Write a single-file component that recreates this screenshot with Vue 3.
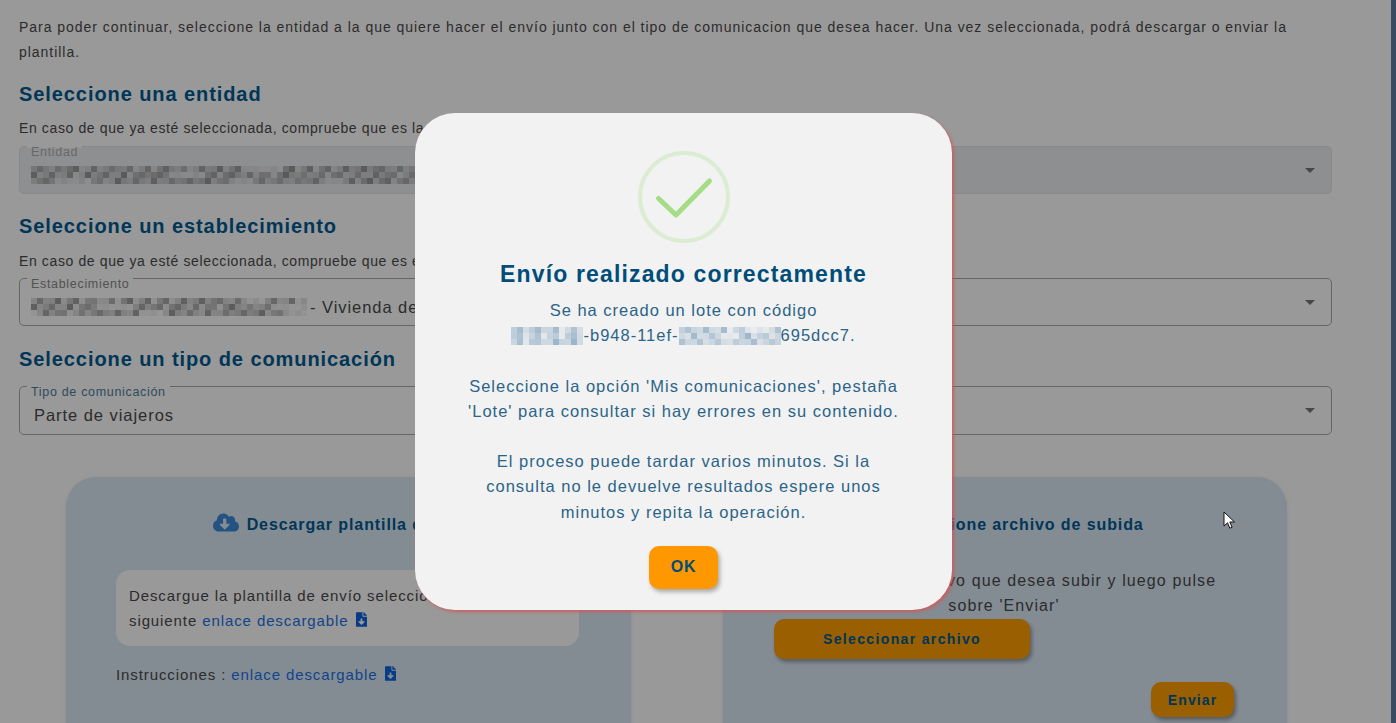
<script setup>
// shades for the censored parts of the text, same result on every render
function mosaic(cols, seed, gaps = []) {
  const cells = []
  let v = seed
  for (let c = 0; c < cols; c++) {
    for (let row = 0; row < 3; row++) {
      v = (v * 73 + 41) % 101
      const base = row === 1 ? 0.45 : row === 0 ? 0.2 : 0.08
      const o = base + (v / 101) * 0.3
      cells.push(+(gaps.includes(c) ? o * 0.25 : o).toFixed(2))
    }
  }
  return cells
}

const entidadCells = mosaic(64, 7, [12, 13, 29, 30, 44, 45, 54, 59])
const estabCells = mosaic(46, 19, [12, 19, 20, 29, 30, 37, 45])
const codeA = mosaic(12, 31)
const codeB = mosaic(17, 53, [4, 8])
</script>

<template>
  <div class="page">
    <div class="main">
      <p class="intro">
        Para poder continuar, seleccione la entidad a la que quiere hacer el envío junto con el tipo de comunicacion que desea hacer. Una vez seleccionada, podrá descargar o enviar la plantilla.
      </p>

      <h2 class="section-title first">Seleccione una entidad</h2>
      <p class="hint">En caso de que ya esté seleccionada, compruebe que es la correcta</p>
      <div class="field disabled">
        <span class="field-label">Entidad</span>
        <div class="field-value">
          <span class="mosaic" :style="{ width: 64 * 6 + 'px' }">
            <i v-for="(o, i) in entidadCells" :key="i" :style="{ opacity: o }"></i>
          </span>
        </div>
        <svg class="arrow" viewBox="0 0 10 5"><path d="M0 0l5 5 5-5z" /></svg>
      </div>

      <h2 class="section-title">Seleccione un establecimiento</h2>
      <p class="hint second">En caso de que ya esté seleccionada, compruebe que es el correcto</p>
      <div class="field">
        <span class="field-label">Establecimiento</span>
        <div class="field-value">
          <span class="mosaic" :style="{ width: 46 * 6 + 'px' }">
            <i v-for="(o, i) in estabCells" :key="i" :style="{ opacity: o }"></i>
          </span>
          <span class="after-mosaic">- Vivienda de uso turístico</span>
        </div>
        <svg class="arrow" viewBox="0 0 10 5"><path d="M0 0l5 5 5-5z" /></svg>
      </div>

      <h2 class="section-title tipo">Seleccione un tipo de comunicación</h2>
      <div class="field tall">
        <span class="field-label blue">Tipo de comunicación</span>
        <div class="field-value plain">Parte de viajeros</div>
        <svg class="arrow" viewBox="0 0 10 5"><path d="M0 0l5 5 5-5z" /></svg>
      </div>

      <div class="panels">
        <section class="panel">
          <h3 class="panel-title">
            <svg class="cloud" viewBox="0 0 640 512"><path d="M537.6 226.6c4.1-10.7 6.4-22.4 6.4-34.6 0-53-43-96-96-96-19.7 0-38.1 6-53.3 16.2C367 64.2 315.3 32 256 32c-88.4 0-160 71.6-160 160 0 2.7.1 5.4.2 8.1C40.2 219.8 0 273.2 0 336c0 79.5 64.5 144 144 144h368c70.7 0 128-57.3 128-128 0-61.9-44-113.6-102.4-125.4zm-132.9 88.7L299.3 420.7c-6.2 6.2-16.4 6.2-22.6 0L171.3 315.3c-10.1-10.1-2.9-27.3 11.3-27.3H248V176c0-8.8 7.2-16 16-16h48c8.8 0 16 7.2 16 16v112h65.4c14.2 0 21.4 17.2 11.3 27.3z" /></svg>
            Descargar plantilla de envío
          </h3>
          <div class="download-box">
            <div>Descargue la plantilla de envío seleccionada en el</div>
            <div>
              siguiente
              <a class="link">enlace descargable
                <svg class="file" viewBox="0 0 384 512"><path d="M224 136V0H24C10.7 0 0 10.7 0 24v464c0 13.3 10.7 24 24 24h336c13.3 0 24-10.7 24-24V160H248c-13.2 0-24-10.8-24-24zm76.45 211.36l-96.42 95.7c-6.65 6.61-17.39 6.61-24.04 0l-96.42-95.7C73.42 337.29 80.54 320 94.82 320H160v-80c0-8.84 7.16-16 16-16h32c8.84 0 16 7.16 16 16v80h65.18c14.28 0 21.4 17.29 11.27 27.36zM377 105L279.1 7c-4.5-4.5-10.6-7-17-7H256v128h128v-6.1c0-6.3-2.5-12.4-7-16.9z" /></svg>
              </a>
            </div>
          </div>
          <p class="instructions">
            Instrucciones :
            <a class="link">enlace descargable
              <svg class="file" viewBox="0 0 384 512"><path d="M224 136V0H24C10.7 0 0 10.7 0 24v464c0 13.3 10.7 24 24 24h336c13.3 0 24-10.7 24-24V160H248c-13.2 0-24-10.8-24-24zm76.45 211.36l-96.42 95.7c-6.65 6.61-17.39 6.61-24.04 0l-96.42-95.7C73.42 337.29 80.54 320 94.82 320H160v-80c0-8.84 7.16-16 16-16h32c8.84 0 16 7.16 16 16v80h65.18c14.28 0 21.4 17.29 11.27 27.36zM377 105L279.1 7c-4.5-4.5-10.6-7-17-7H256v128h128v-6.1c0-6.3-2.5-12.4-7-16.9z" /></svg>
            </a>
          </p>
        </section>

        <section class="panel">
          <h3 class="panel-title right">Seleccione archivo de subida</h3>
          <p class="upload-text">Seleccione el archivo que desea subir y luego pulse sobre 'Enviar'</p>
          <button class="btn select-btn">Seleccionar archivo</button>
          <div class="send-row">
            <button class="btn send-btn">Enviar</button>
          </div>
        </section>
      </div>
    </div>
    <div class="scrollbar"></div>

    <div class="overlay">
      <div class="modal">
        <svg class="check" viewBox="0 0 92 92">
          <circle cx="46" cy="46" r="44" fill="none" stroke="#dcecd2" stroke-width="4" />
          <path d="M20.500 47.500L38 64L71.500 30" fill="none" stroke="#a5dc86" stroke-width="5" stroke-linecap="round" stroke-linejoin="round" />
        </svg>
        <h2 class="modal-title">Envío realizado correctamente</h2>
        <div class="modal-body">
          <p>
            Se ha creado un lote con código
            <span class="code-line"><span class="mosaic code" :style="{ width: 12 * 6 + 'px' }">
              <i v-for="(o, i) in codeA" :key="i" :style="{ opacity: o }"></i>
            </span>-b948-11ef-<span class="mosaic code" :style="{ width: 17 * 6 + 'px' }">
              <i v-for="(o, i) in codeB" :key="i" :style="{ opacity: o }"></i>
            </span>695dcc7.</span>
          </p>
          <p>Seleccione la opción 'Mis comunicaciones', pestaña 'Lote' para consultar si hay errores en su contenido.</p>
          <p>El proceso puede tardar varios minutos. Si la consulta no le devuelve resultados espere unos minutos y repita la operación.</p>
        </div>
        <button class="ok-btn">OK</button>
      </div>
    </div>

    <svg class="cursor" viewBox="0 0 12 19">
      <path d="M1 1v14l3.500-3.200 2.300 5.400 2.300-1-2.300-5.200h4.700z" fill="#fff" stroke="#111" stroke-width="1" />
    </svg>
  </div>
</template>

<style scoped>
.page {
  position: relative;
  display: flex;
  height: 723px;
  overflow: hidden;
  background: #fff;
  font-family: "Liberation Sans", Arial, sans-serif;
  color: #4a4a4a;
}

.main {
  flex: 1;
  min-width: 0;
  padding: 15px 59px 0 19px;
}

.scrollbar {
  width: 5px;
  background: #5f7ca0;
}

.intro {
  margin: 0;
  font-size: 14px;
  line-height: 25px;
  letter-spacing: 0.97px;
}

.section-title {
  margin: 18px 0 0;
  height: 28px;
  font-size: 20px;
  line-height: 28px;
  font-weight: 700;
  letter-spacing: 0.92px;
  color: #005a92;
}

.section-title.first {
  margin-top: 15px;
}

.section-title.tipo {
  margin: 19px 0 13px;
}

.hint {
  margin: 8px 0 5px;
  font-size: 14px;
  line-height: 25px;
  letter-spacing: 0.62px;
}

.hint.second {
  margin: 9px 0 4px;
}

.field {
  position: relative;
  height: 48px;
  border: 1px solid #a9a9a9;
  border-radius: 5px;
  box-sizing: border-box;
}

.field.tall {
  height: 49px;
}

.field.disabled {
  background: #eceef1;
  border-color: #e3e5e8;
}

.field-label {
  position: absolute;
  top: -2px;
  left: 7px;
  padding: 0 4px;
  background: linear-gradient(#fff 3px, transparent 3px);
  font-size: 12.500px;
  line-height: 15px;
  letter-spacing: 0.68px;
  color: #8a8a8a;
}

.field.disabled .field-label {
  color: #b0b0b0;
}

.field-label.blue {
  color: #4c7da0;
}

.field-value {
  display: flex;
  align-items: center;
  height: 100%;
  padding: 10px 0 0 11px;
  box-sizing: border-box;
  font-size: 16.500px;
  letter-spacing: 0.95px;
  color: #4a4a4a;
  white-space: nowrap;
}

.after-mosaic {
  margin-left: 3px;
}

.field-value.plain {
  padding-left: 14px;
}

.arrow {
  position: absolute;
  top: 21px;
  right: 16px;
  width: 10px;
  height: 5px;
  fill: #777;
}

.mosaic {
  display: inline-block;
  flex: none;
  height: 18px;
  overflow: hidden;
  vertical-align: -4px;
  filter: blur(0.5px);
}

.mosaic i {
  display: block;
  float: left;
  width: 6px;
  height: 6px;
  background: #777;
}

.mosaic.code i {
  background: #7da0bc;
}

.panels {
  display: grid;
  grid-template-columns: 565px 564px;
  gap: 92px;
  margin: 42px 0 0 47px;
}

.panel {
  height: 300px;
  padding: 35px 50px 0;
  border-radius: 30px;
  background: #dde9f6;
  box-shadow: 0 1px 4px rgba(0, 0, 0, 0.08);
  box-sizing: border-box;
}

.panel-title {
  display: flex;
  align-items: center;
  justify-content: center;
  gap: 8px;
  height: 26px;
  margin: 0;
  font-size: 16px;
  font-weight: 700;
  letter-spacing: 0.9px;
  color: #005a92;
}

.panel-title.right {
  padding-left: 28px;
}

.cloud {
  width: 26px;
  height: 21px;
  margin-top: -5px;
  fill: #3d8ad8;
}

.download-box {
  margin-top: 32px;
  padding: 13px 13px 0;
  height: 76px;
  width: 463px;
  box-sizing: border-box;
  border-radius: 14px;
  background: #fff;
  font-size: 15px;
  line-height: 25px;
  letter-spacing: 0.9px;
}

.instructions {
  margin: 16px 0 0;
  font-size: 15px;
  line-height: 25px;
  letter-spacing: 0.9px;
}

.link {
  color: #1a73e8;
}

.file {
  width: 11px;
  height: 15px;
  margin-left: 2px;
  vertical-align: -1px;
  fill: #0d63e0;
}

.upload-text {
  width: 436px;
  margin: 30px 0 0 13px;
  font-size: 16px;
  line-height: 25px;
  letter-spacing: 1.1px;
  text-align: center;
}

.btn {
  display: block;
  border: 0;
  background: #ff9f00;
  font-family: "Liberation Sans", Arial, sans-serif;
  font-weight: 700;
  font-size: 14px;
  letter-spacing: 1.35px;
  color: #005a92;
  border-radius: 10px;
  box-shadow: 2px 3px 4px rgba(0, 0, 0, 0.35);
}

.select-btn {
  width: 256px;
  height: 40px;
  margin: 1px 0 0 1px;
}

.send-row {
  display: flex;
  justify-content: flex-end;
  margin-top: 23px;
  padding-right: 3px;
}

.send-btn {
  width: 83px;
  height: 35px;
  letter-spacing: 1.1px;
}

.overlay {
  position: absolute;
  inset: 0;
  display: flex;
  align-items: center;
  justify-content: center;
  padding-right: 29px;
  background: rgba(0, 0, 0, 0.4);
}

.modal {
  display: flex;
  flex-direction: column;
  align-items: center;
  width: 537px;
  height: 497px;
  padding: 38px 0 21px;
  box-sizing: border-box;
  border-radius: 40px;
  background: #f2f2f2;
  box-shadow: 2px 2px 3px rgba(205, 90, 90, 0.85);
}

.check {
  width: 92px;
  height: 92px;
  flex: none;
}

.modal-title {
  height: 30px;
  margin: 16px 0 0;
  font-size: 23px;
  line-height: 30px;
  font-weight: 700;
  letter-spacing: 1.15px;
  color: #004d7a;
}

.modal-body {
  width: 440px;
  margin-top: 9px;
  font-size: 16.500px;
  line-height: 25.200px;
  letter-spacing: 1px;
  text-align: center;
  color: #2b6488;
}

.modal-body p {
  margin: 0 0 25.200px;
}

.modal-body p:last-child {
  margin-bottom: 0;
}

.code-line {
  white-space: nowrap;
}

.ok-btn {
  width: 69px;
  height: 43px;
  margin-top: 21px;
  flex: none;
  border: 0;
  border-radius: 10px;
  background: #ff9800;
  font-family: "Liberation Sans", Arial, sans-serif;
  font-size: 16px;
  font-weight: 700;
  letter-spacing: 0.8px;
  color: #004d7a;
  box-shadow: 2px 3px 4px rgba(0, 0, 0, 0.3);
}

.cursor {
  position: absolute;
  left: 1223px;
  top: 511px;
  width: 12px;
  height: 19px;
}
</style>

<style>
html,
body {
  overflow: hidden;
}
</style>
